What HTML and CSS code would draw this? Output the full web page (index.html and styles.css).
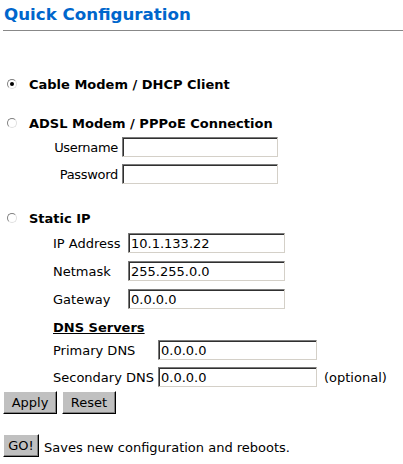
FILE: index.html
```html
<!DOCTYPE html>
<html>
<head>
<meta charset="utf-8">
<link rel="stylesheet" href="styles.css">
</head>
<body>
<h1 class="title">Quick Configuration</h1>
<hr class="rule">
<form class="form">
  <label class="opt opt-cable"><input type="radio" name="mode" class="radio" checked><span class="opt-label">Cable Modem / DHCP Client</span></label>

  <label class="opt opt-adsl"><input type="radio" name="mode" class="radio"><span class="opt-label">ADSL Modem / PPPoE Connection</span></label>
  <div class="fields fields-adsl">
    <span class="lbl">Username</span><input class="txt" type="text">
    <span class="lbl">Password</span><input class="txt" type="password">
  </div>

  <label class="opt opt-static"><input type="radio" name="mode" class="radio"><span class="opt-label">Static IP</span></label>
  <div class="fields fields-static">
    <span class="lbl">IP Address</span><input class="txt" type="text" value="10.1.133.22">
    <span class="lbl">Netmask</span><input class="txt" type="text" value="255.255.0.0">
    <span class="lbl">Gateway</span><input class="txt" type="text" value="0.0.0.0">
  </div>
  <div class="dns-head">DNS Servers</div>
  <div class="fields fields-dns">
    <span class="lbl">Primary DNS</span><input class="txt" type="text" value="0.0.0.0"><span></span>
    <span class="lbl">Secondary DNS</span><input class="txt" type="text" value="0.0.0.0"><span class="note">(optional)</span>
  </div>
  <div class="btn-row">
    <button type="button" class="btn btn-wide">Apply</button>
    <button type="button" class="btn btn-wide">Reset</button>
  </div>
  <div class="go-row">
    <button type="button" class="btn btn-go">GO!</button>
    <span class="go-text">Saves new configuration and reboots.</span>
  </div>
</form>
</body>
</html>
```
FILE: styles.css
```css
html, body {
  margin: 0;
  padding: 0;
  background: #ffffff;
}
body {
  font-family: "DejaVu Sans", Verdana, sans-serif;
  font-size: 13px;
  color: #000;
  width: 403px;
}
.title {
  margin: 0;
  padding: 3px 0 0 4px;
  font-size: 16.7px;
  font-weight: bold;
  color: #0066cc;
  line-height: 22px;
  height: 23px;
}
.rule {
  margin: 4px 0 0 3px;
  border: 0;
  border-top: 1px solid #888888;
  height: 0;
}
.form {
  margin: 0;
  padding: 0 0 0 3px;
}
.opt {
  display: flex;
  align-items: center;
  gap: 12px;
  height: 16px;
  font-weight: bold;
  padding-left: 4px;
}
.opt-cable { margin-top: 45px; }
.opt-adsl { margin-top: 23px; }
.opt-static { margin-top: 26px; }
.radio {
  appearance: none;
  -webkit-appearance: none;
  margin: 0;
  width: 10px;
  height: 10px;
  border-radius: 50%;
  border: 1px solid;
  border-color: #808080 #e0e0e0 #e0e0e0 #808080;
  background: #fff;
  position: relative;
  box-sizing: border-box;
}
.radio:checked::after {
  content: "";
  position: absolute;
  left: 2px;
  top: 2px;
  width: 4px;
  height: 4px;
  border-radius: 50%;
  background: #000;
}
.fields {
  display: grid;
  column-gap: 4px;
  row-gap: 7px;
  align-items: center;
  padding-left: 50px;
}
.fields-adsl {
  grid-template-columns: 65px 156px;
  margin-top: 6px;
}
.fields-static {
  grid-template-columns: 71px 157px;
  margin-top: 7px;
  row-gap: 8px;
}
.fields-dns {
  grid-template-columns: 101px 159px auto;
  margin-top: 5px;
  row-gap: 7px;
}
.lbl {
  white-space: nowrap;
}
.fields-adsl .lbl {
  text-align: right;
  letter-spacing: -0.3px;
}
.txt {
  box-sizing: border-box;
  height: 20px;
  width: 100%;
  margin: 0;
  padding: 1px 2px 0;
  font-family: "DejaVu Sans", Verdana, sans-serif;
  font-size: 13px;
  color: #000;
  background: #fff;
  border: 1px solid;
  border-color: #7a7a7a #d4d0c8 #d4d0c8 #7a7a7a;
  box-shadow: inset 1px 1px 0 #303030;
  outline: none;
}
.note {
  padding-left: 3px;
}
.dns-head {
  margin: 12px 0 0 50px;
  font-weight: bold;
  text-decoration: underline;
  height: 14px;
  line-height: 14px;
}
.btn-row {
  display: flex;
  gap: 5px;
  margin-top: 4px;
}
.btn {
  box-sizing: border-box;
  height: 23px;
  margin: 0;
  padding: 0;
  font-family: "DejaVu Sans", Verdana, sans-serif;
  font-size: 13px;
  color: #000;
  background: #c0c0c0;
  border: 1px solid;
  border-color: #ffffff #000000 #000000 #ffffff;
  box-shadow: inset -1px -1px 0 #808080;
}
.btn-wide { width: 54px; }
.btn-go { width: 36px; }
.go-row {
  display: flex;
  align-items: center;
  gap: 5px;
  margin-top: 20px;
}
.go-text {
  padding-top: 3px;
}
```
